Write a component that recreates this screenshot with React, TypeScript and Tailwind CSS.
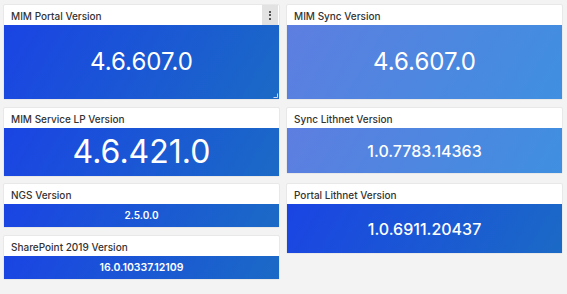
const deep = "bg-[linear-gradient(120deg,#1a44e3_0%,#1b6ac6_100%)]";
const soft = "bg-[linear-gradient(120deg,#5d7ee0_0%,#3f8fe0_100%)]";

interface PanelProps {
  title: string;
  value: string;
  height: string;
  valueClass: string;
  tone: string;
  menu?: boolean;
}

function Panel({ title, value, height, valueClass, tone, menu }: PanelProps) {
  return (
    <div className={`${height} flex flex-col bg-white border border-[#e8e8e8] rounded-[2px]`}>
      <div className="h-[20px] flex items-center justify-between shrink-0">
        <span className="pl-[7px] pt-[2px] text-[10px] font-medium text-[#333]">{title}</span>
        {menu && (
          <div className="w-[16px] h-[20px] bg-[#e2e2e2] flex flex-col items-center justify-center gap-[1.5px] mr-[1px]">
            <span className="w-[2px] h-[2px] bg-[#555]" />
            <span className="w-[2px] h-[2px] bg-[#555]" />
            <span className="w-[2px] h-[2px] bg-[#555]" />
          </div>
        )}
      </div>
      <div className={`relative flex-1 flex items-center justify-center ${tone}`}>
        <span className={`text-white ${valueClass}`}>{value}</span>
        {menu && (
          <svg className="absolute right-[1px] bottom-[1px]" width="5" height="5" viewBox="0 0 5 5">
            <path d="M4.5 0.5 V4.5 H0.5" stroke="#c8d4f0" strokeWidth="1" fill="none" />
          </svg>
        )}
      </div>
    </div>
  );
}

export default function App() {
  return (
    <div
      className="w-[567px] h-[294px] bg-[#f3f3f3] pt-[4px] pl-[3px] pr-[4px] grid grid-cols-2 gap-[6px]"
      style={{ fontFamily: "Inter, 'Liberation Sans', sans-serif" }}
    >
      <div className="flex flex-col">
        <Panel title="MIM Portal Version" value="4.6.607.0" height="h-[96px]" valueClass="text-[24px]" tone={deep} menu />
        <div className="h-[7px]" />
        <Panel title="MIM Service LP Version" value="4.6.421.0" height="h-[70px]" valueClass="text-[32px]" tone={deep} />
        <div className="h-[6px]" />
        <Panel title="NGS Version" value="2.5.0.0" height="h-[45px]" valueClass="text-[10px] font-semibold" tone={deep} />
        <div className="h-[7px]" />
        <Panel title="SharePoint 2019 Version" value="16.0.10337.12109" height="h-[45px]" valueClass="text-[10.5px] font-semibold" tone={deep} />
      </div>
      <div className="flex flex-col">
        <Panel title="MIM Sync Version" value="4.6.607.0" height="h-[96px]" valueClass="text-[24px]" tone={soft} />
        <div className="h-[7px]" />
        <Panel title="Sync Lithnet Version" value="1.0.7783.14363" height="h-[67px]" valueClass="text-[16px] font-medium" tone={soft} />
        <div className="h-[9px]" />
        <Panel title="Portal Lithnet Version" value="1.0.6911.20437" height="h-[71px]" valueClass="text-[16px] font-medium" tone={deep} />
      </div>
    </div>
  );
}
